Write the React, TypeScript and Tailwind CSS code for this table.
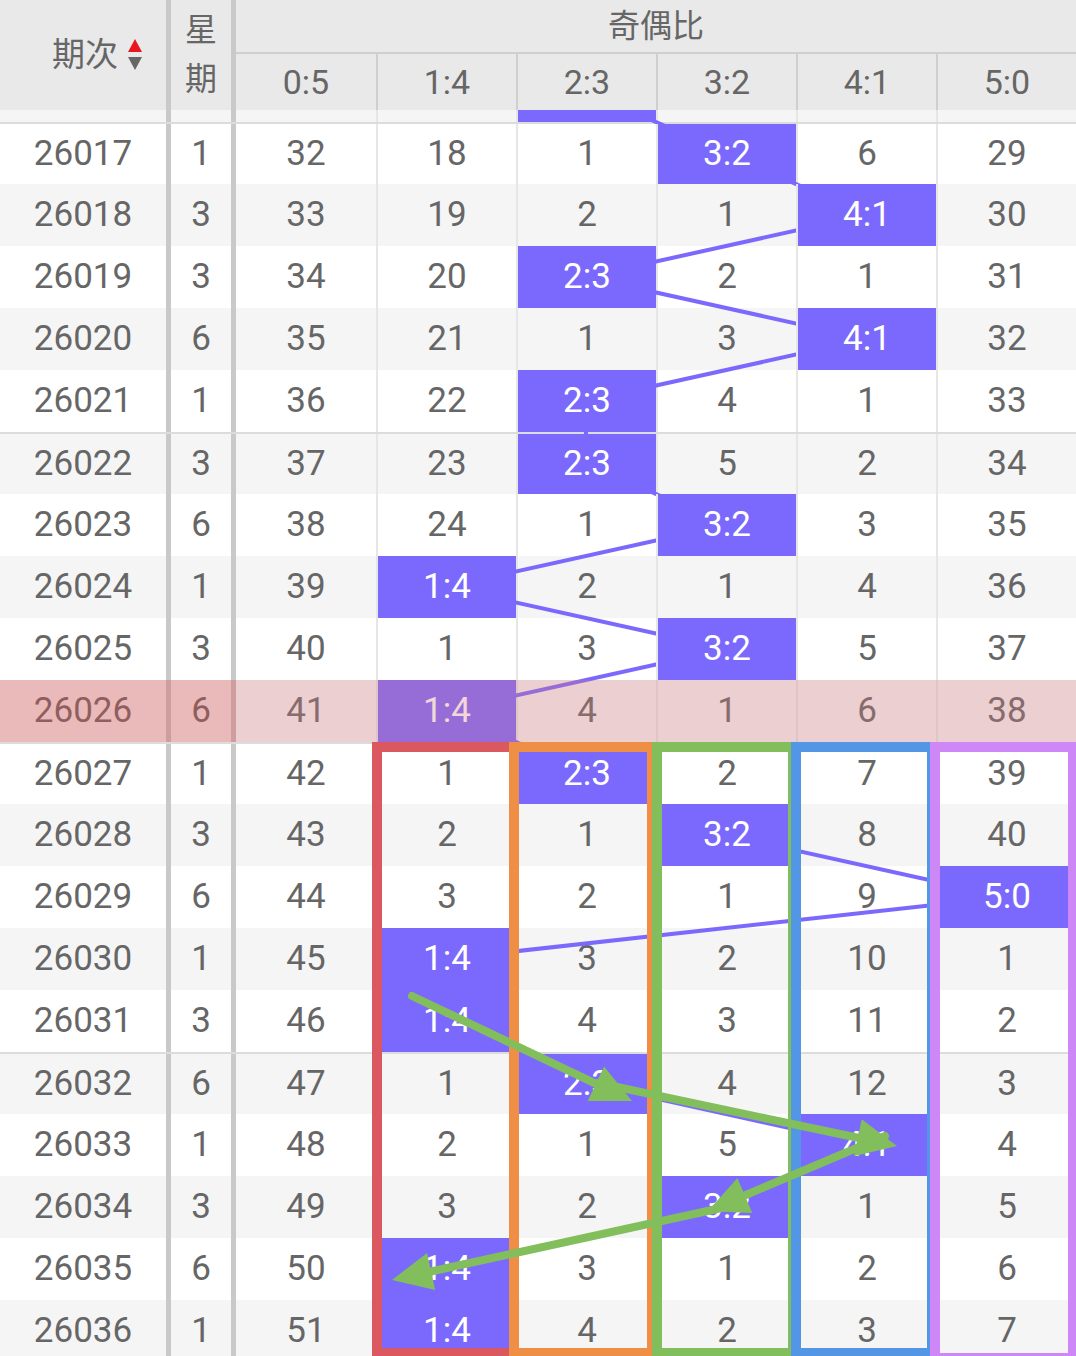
import React from 'react';

const ratios = ['0:5', '1:4', '2:3', '3:2', '4:1', '5:0'];

type Row = { p: number; w: number; v: (number | string)[] };

// first row (26016) is scrolled mostly under the header, only its bottom strip shows
const rows: Row[] = [
  { p: 26016, w: 6, v: [31, 17, '2:3', 4, 5, 28] },
  { p: 26017, w: 1, v: [32, 18, 1, '3:2', 6, 29] },
  { p: 26018, w: 3, v: [33, 19, 2, 1, '4:1', 30] },
  { p: 26019, w: 3, v: [34, 20, '2:3', 2, 1, 31] },
  { p: 26020, w: 6, v: [35, 21, 1, 3, '4:1', 32] },
  { p: 26021, w: 1, v: [36, 22, '2:3', 4, 1, 33] },
  { p: 26022, w: 3, v: [37, 23, '2:3', 5, 2, 34] },
  { p: 26023, w: 6, v: [38, 24, 1, '3:2', 3, 35] },
  { p: 26024, w: 1, v: [39, '1:4', 2, 1, 4, 36] },
  { p: 26025, w: 3, v: [40, 1, 3, '3:2', 5, 37] },
  { p: 26026, w: 6, v: [41, '1:4', 4, 1, 6, 38] },
  { p: 26027, w: 1, v: [42, 1, '2:3', 2, 7, 39] },
  { p: 26028, w: 3, v: [43, 2, 1, '3:2', 8, 40] },
  { p: 26029, w: 6, v: [44, 3, 2, 1, 9, '5:0'] },
  { p: 26030, w: 1, v: [45, '1:4', 3, 2, 10, 1] },
  { p: 26031, w: 3, v: [46, '1:4', 4, 3, 11, 2] },
  { p: 26032, w: 6, v: [47, 1, '2:3', 4, 12, 3] },
  { p: 26033, w: 1, v: [48, 2, 1, 5, '4:1', 4] },
  { p: 26034, w: 3, v: [49, 3, 2, '3:2', 1, 5] },
  { p: 26035, w: 6, v: [50, '1:4', 3, 1, 2, 6] },
  { p: 26036, w: 1, v: [51, '1:4', 4, 2, 3, 7] },
];

const ROW_H = 62;
const hitOf = (r: Row) => r.v.findIndex((x) => typeof x === 'string');

function SortIcon() {
  return (
    <svg width="16" height="34" viewBox="0 0 16 34" className="ml-[9px]">
      <polygon points="8,1 15,14 1,14" fill="#e8161e" />
      <polygon points="1,19 15,19 8,32" fill="#666666" />
    </svg>
  );
}

function Arrow({ x1, y1, x2, y2 }: { x1: number; y1: number; x2: number; y2: number }) {
  const dx = x2 - x1;
  const dy = y2 - y1;
  const len = Math.hypot(dx, dy);
  const ux = dx / len;
  const uy = dy / len;
  const L = 40;
  const W = 19;
  const bx = x2 - ux * L;
  const by = y2 - uy * L;
  return (
    <g>
      <line x1={x1} y1={y1} x2={bx + ux * 6} y2={by + uy * 6} stroke="#82bf5c" strokeWidth="8" strokeLinecap="round" />
      <polygon
        points={`${x2},${y2} ${bx - uy * W},${by + ux * W} ${bx + uy * W},${by - ux * W}`}
        fill="#82bf5c"
      />
    </g>
  );
}

function Sep() {
  return <div className="w-[5px] shrink-0 bg-[#c9c9c9]" />;
}

export default function App() {
  const pts = rows.map((r, i) => ({ x: 306 + 140 * hitOf(r), y: ROW_H * i + 31 }));

  return (
    <div className="relative w-[1076px] h-[1356px] overflow-hidden bg-white text-[#666] font-['Roboto','Noto_Sans_CJK_SC',sans-serif]">
      {/* header */}
      <div className="relative z-10 flex h-[110px] bg-[#e9e9e9]">
        <div className="w-[166px] shrink-0 flex items-center pl-[52px] text-[33px]">
          <span>期次</span>
          <SortIcon />
        </div>
        <Sep />
        <div className="w-[60px] shrink-0 flex flex-col items-center justify-center text-[32px] leading-[49px]">
          <span>星</span>
          <span>期</span>
        </div>
        <Sep />
        <div className="flex-1 flex flex-col">
          <div className="h-[54px] border-b-2 border-[#cfcfcf] flex items-center justify-center text-[32px]">
            奇偶比
          </div>
          <div className="flex flex-1">
            {ratios.map((r, k) => (
              <div
                key={r}
                className={`w-[140px] flex items-center justify-center text-[34px] ${
                  k ? 'border-l-2 border-[#cfcfcf]' : ''
                }`}
              >
                {r}
              </div>
            ))}
          </div>
        </div>
      </div>

      {/* body, scrolled by 50px */}
      <div className="h-[1246px] overflow-hidden">
        <div className="relative -mt-[50px]">
          <svg className="absolute left-0 top-0 z-[1]" width="1076" height={rows.length * ROW_H}>
            {pts.slice(1).map((p, i) => (
              <line key={i} x1={pts[i].x} y1={pts[i].y} x2={p.x} y2={p.y} stroke="#7b69fd" strokeWidth="4" />
            ))}
          </svg>

          {rows.map((r, i) => {
            const hit = hitOf(r);
            const hidden = i === 0;
            const groupStart = (r.p - 26017) % 5 === 0;
            const pink = r.p === 26026;
            return (
              <div
                key={r.p}
                className={`flex h-[62px] text-[35px] ${r.p % 2 ? 'bg-white' : 'bg-[#f5f5f5]'} ${
                  groupStart ? 'border-t-2 border-[#dcdcdc]' : ''
                } ${pink ? 'relative' : ''}`}
              >
                <div className="w-[166px] shrink-0 flex items-center justify-center">{hidden ? '' : r.p}</div>
                <Sep />
                <div className="w-[60px] shrink-0 flex items-center justify-center">{hidden ? '' : r.w}</div>
                <Sep />
                {r.v.map((x, k) => (
                  <div
                    key={k}
                    className={`w-[140px] shrink-0 flex items-center justify-center ${
                      k ? 'border-l-2 border-[#e6e6e6]' : ''
                    } ${k === hit ? 'relative z-[2] bg-[#7b69fd] text-white' : ''}`}
                  >
                    {hidden ? '' : x}
                  </div>
                ))}
                {pink && (
                  <>
                    <div className="absolute left-0 top-0 bottom-0 w-[236px] z-[3] bg-[rgba(215,80,80,0.36)]" />
                    <div className="absolute left-[236px] right-0 top-0 bottom-0 z-[3] bg-[rgba(212,118,125,0.3)]" />
                  </>
                )}
              </div>
            );
          })}
        </div>
      </div>

      {/* hand-drawn frames */}
      <div className="absolute z-[4] left-[372px] top-[742px] w-[147px] h-[614px] border-[10px] border-b-[8px] border-[#dc5860]" />
      <div className="absolute z-[4] left-[509px] top-[742px] w-[143px] h-[614px] border-[10px] border-r-[5px] border-b-[8px] border-[#ef8f45]" />
      <div className="absolute z-[4] left-[652px] top-[742px] w-[139px] h-[614px] border-[10px] border-r-[3px] border-b-[8px] border-[#82bf5c]" />
      <div className="absolute z-[4] left-[791px] top-[742px] w-[139px] h-[614px] border-[10px] border-r-[3px] border-b-[8px] border-[#5496e6]" />
      <div className="absolute z-[4] left-[930px] top-[742px] w-[146px] h-[614px] border-[10px] border-r-[8px] border-b-[3px] border-[#cd87f7]" />

      {/* arrows */}
      <svg className="absolute left-0 top-0 z-[5] pointer-events-none" width="1076" height="1356">
        <Arrow x1={412} y1={996} x2={632} y2={1101} />
        <Arrow x1={598} y1={1083} x2={897} y2={1146} />
        <Arrow x1={885} y1={1136} x2={708} y2={1211} />
        <Arrow x1={735} y1={1205} x2={392} y2={1280} />
      </svg>
    </div>
  );
}
